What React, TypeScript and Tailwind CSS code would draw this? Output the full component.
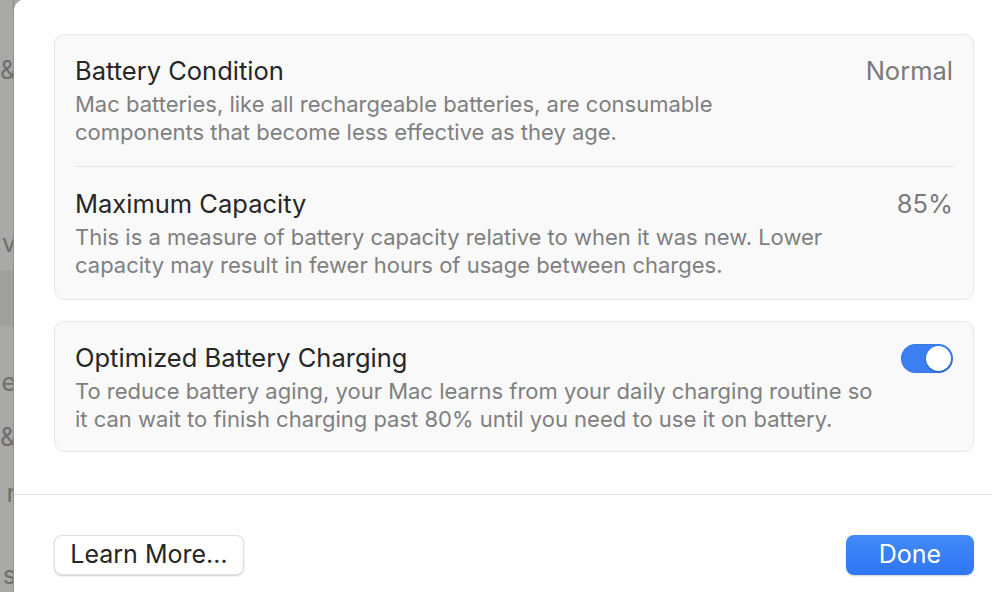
import React from "react";

const font = { fontFamily: "Inter, 'Noto Sans', sans-serif" };

function Row({
  title,
  desc,
  right,
  className = "",
}: {
  title: string;
  desc: React.ReactNode;
  right: React.ReactNode;
  className?: string;
}) {
  return (
    <div className={"flex items-start justify-between " + className}>
      <div className="flex flex-col gap-[4px]">
        <div className="text-[25.5px] leading-[30px] text-[#262626]">{title}</div>
        <div className="text-[22px] leading-[28px] text-[#7f7f7f]">{desc}</div>
      </div>
      {right}
    </div>
  );
}

export default function App() {
  const side = [
    { t: "&", h: 173 },
    { t: "v", h: 139 },
    { t: "e", h: 55 },
    { t: "&", h: 56 },
    { t: "r", h: 82 },
    { t: "s", h: 30 },
  ];
  return (
    <div className="w-[992px] h-[592px] overflow-hidden flex bg-[#a9a9a7]" style={font}>
      <div className="relative w-[14px] shrink-0 bg-[#a9a9a7] border-r border-[#8f8f8d] overflow-hidden">
        <div className="absolute left-0 top-[270px] w-full h-[56px] bg-[#a0a09e]" />
        <div className="relative flex flex-col items-end pt-[55px]">
          {side.map((s, i) => (
            <div
              key={i}
              className="w-[40px] flex justify-end text-[25px] leading-[30px] text-[#6e6e6c] mr-[-3px]"
              style={{ height: s.h }}
            >
              {s.t}
            </div>
          ))}
        </div>
      </div>
      <div className="flex-1 bg-white rounded-tl-[12px] mt-[-1px] flex flex-col">
        <div className="pl-[40px] pr-[18px] pt-[35px] flex flex-col gap-[21px]">
          <div className="rounded-[10px] bg-[#f9f9f9] border border-[#e6e6e6] px-5">
            <Row
              className="pt-[21px] pb-[20px] border-b border-[#e2e2e2]"
              title="Battery Condition"
              desc={
                <>
                  Mac batteries, like all rechargeable batteries, are consumable
                  <br />
                  components that become less effective as they age.
                </>
              }
              right={<div className="text-[25.5px] leading-[30px] text-[#7a7a7a]">Normal</div>}
            />
            <Row
              className="pt-[22px] pb-[20px]"
              title="Maximum Capacity"
              desc={
                <>
                  This is a measure of battery capacity relative to when it was new. Lower
                  <br />
                  capacity may result in fewer hours of usage between charges.
                </>
              }
              right={<div className="text-[25.5px] leading-[30px] text-[#7a7a7a]">85%</div>}
            />
          </div>
          <div className="rounded-[10px] bg-[#f9f9f9] border border-[#e6e6e6] px-5">
            <Row
              className="pt-[21px] pb-[18px]"
              title="Optimized Battery Charging"
              desc={
                <>
                  To reduce battery aging, your Mac learns from your daily charging routine so
                  <br />
                  it can wait to finish charging past 80% until you need to use it on battery.
                </>
              }
              right={
                <div className="mt-[1px] w-[52px] h-[29px] rounded-full bg-[#3b7ff3] flex items-center justify-end px-[2px] shadow-[inset_0_0_0_1px_rgba(0,0,0,0.06)]">
                  <div className="w-[25px] h-[25px] rounded-full bg-white shadow-[0_1px_2px_rgba(0,0,0,0.3)]" />
                </div>
              }
            />
          </div>
        </div>
        <div className="mt-[42px] border-t border-[#e3e3e3]" />
        <div className="pl-[40px] pr-[18px] pt-[40px] flex justify-between">
          <button className="h-[40px] w-[190px] rounded-[8px] bg-white border border-[#e0e0e0] shadow-[0_1px_2px_rgba(0,0,0,0.2)] text-[25px] text-[#262626] flex items-center justify-center">
            Learn More…
          </button>
          <button className="h-[40px] w-[128px] rounded-[8px] bg-gradient-to-b from-[#418af8] to-[#2f76f2] shadow-[0_1px_2px_rgba(0,0,0,0.2)] text-[25px] text-white flex items-center justify-center">
            Done
          </button>
        </div>
      </div>
    </div>
  );
}
